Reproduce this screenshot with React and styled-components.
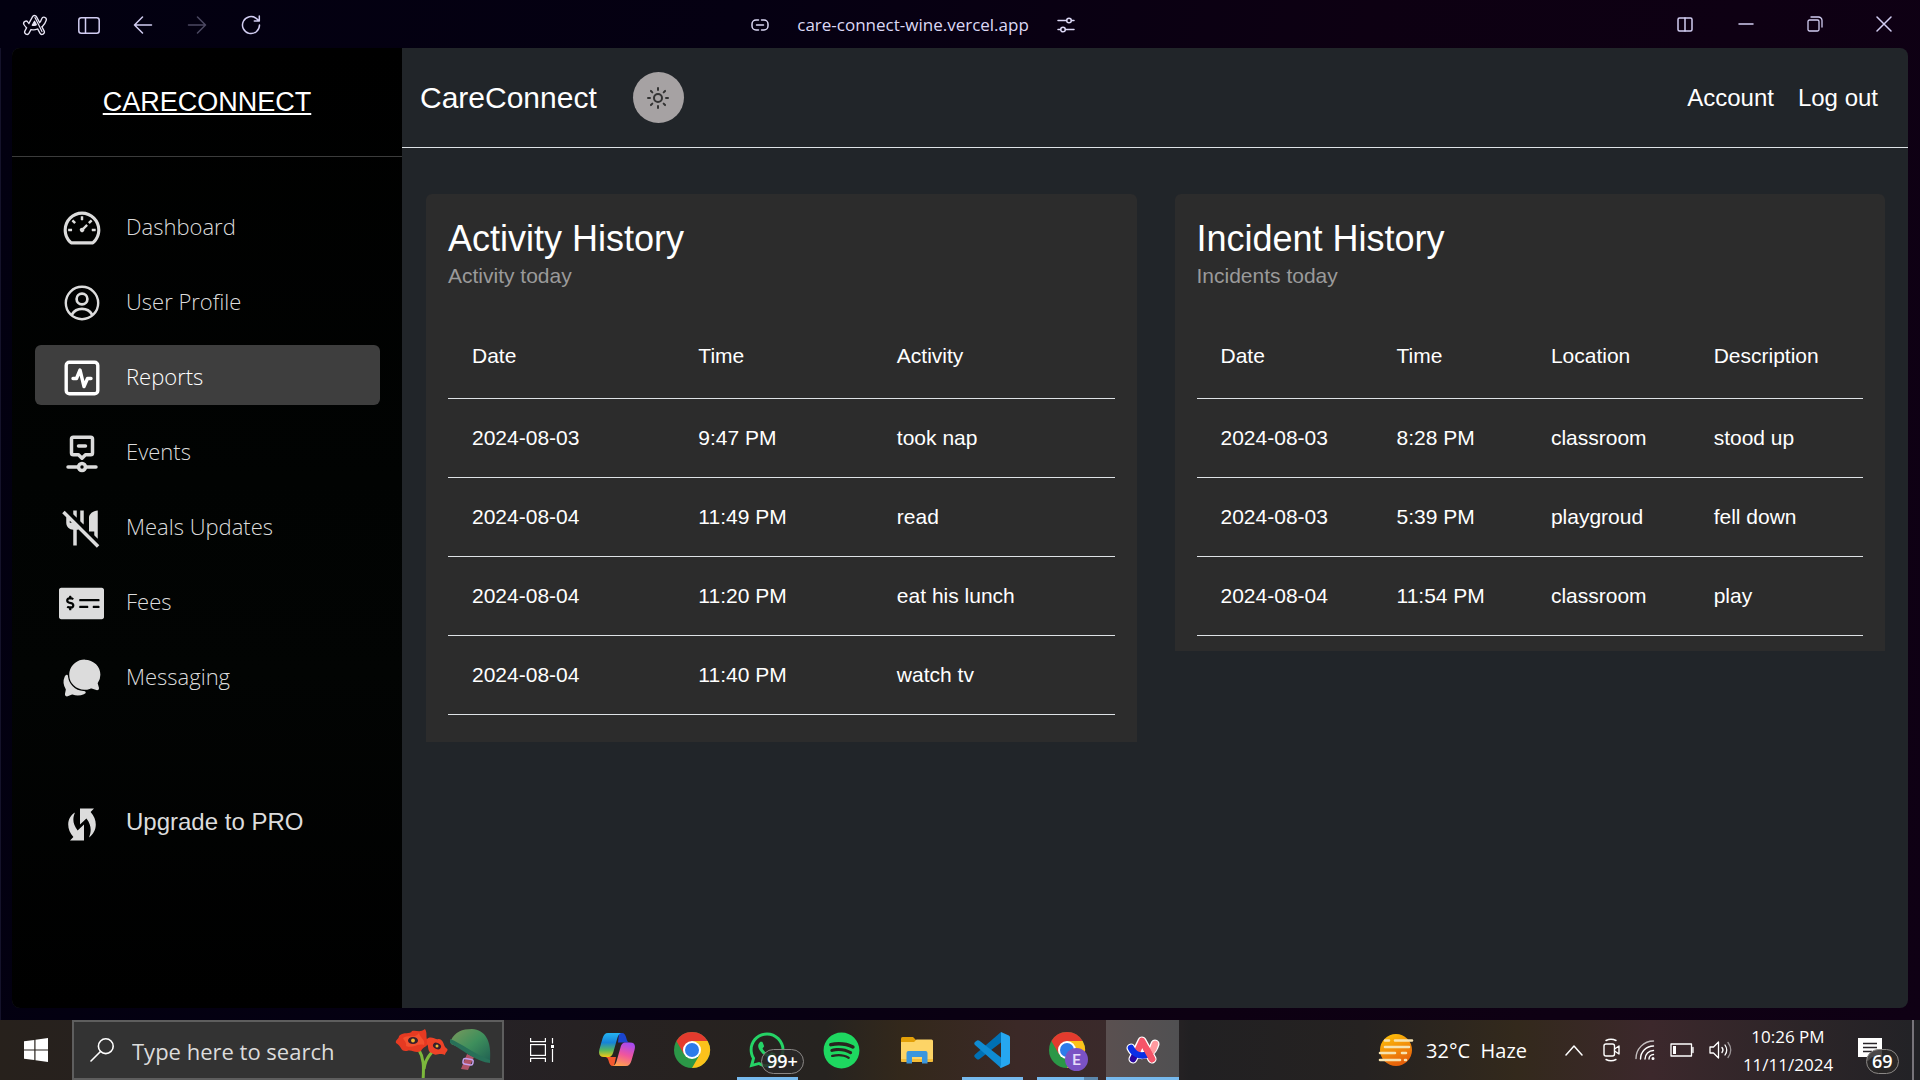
import React from "react";
import styled, { createGlobalStyle } from "styled-components";
import { AiOutlineDashboard } from "react-icons/ai";
import { MdNoMeals } from "react-icons/md";
import { FaMoneyCheckAlt, FaSpotify, FaWhatsapp } from "react-icons/fa";
import { IoChatbubbles } from "react-icons/io5";
import { TbTimelineEventMinus } from "react-icons/tb";
import { Sun } from "lucide-react";

const ui = `"Segoe UI", "Open Sans", "Noto Sans", sans-serif`;
const sans = `"Liberation Sans", Arial, sans-serif`;

const GlobalStyle = createGlobalStyle`
  *, *::before, *::after { box-sizing: border-box; }
  body { margin: 0; background: #05000f; font-family: ${sans}; color: #fff; }
  button { font: inherit; color: inherit; background: none; border: 0; padding: 0; cursor: pointer; }
  a { color: inherit; text-decoration: none; }
  h1, h2, p, ul { margin: 0; padding: 0; font-weight: 400; }
  ul { list-style: none; }
  svg { display: block; flex: none; }
`;

const Screen = styled.div`
  min-height: 100vh;
  display: flex;
  flex-direction: column;
  background: linear-gradient(100deg, #020010 0%, #050012 35%, #0d0012 65%, #0f0014 100%);
`;

/* ---------- browser bar ---------- */

const TitleBar = styled.header`
  height: 48px;
  display: grid;
  grid-template-columns: 8fr auto 9fr;
  align-items: center;
  color: #d2cdf2;
`;

const NavTools = styled.div`
  display: flex;
  align-items: center;
  padding: 2px 0 0 8px;
`;

const ToolButton = styled.button`
  width: 54px;
  height: 46px;
  display: grid;
  place-items: center;
  color: ${(p) => (p.$dim ? "#4c4862" : "inherit")};
`;

const Address = styled.div`
  display: flex;
  align-items: center;
  gap: 28px;
  padding-top: 2px;
  font-family: ${ui};
  font-size: 17px;
  line-height: 24px;
  color: #dcd8f5;
`;

const WindowTools = styled.div`
  display: flex;
  justify-content: flex-end;
  padding-right: 2px;
`;

const WindowButton = styled.button`
  width: ${(p) => (p.$narrow ? 52 : 69)}px;
  height: 48px;
  display: grid;
  place-items: center;
`;

/* ---------- app shell ---------- */

const Frame = styled.div`
  flex: 1;
  display: flex;
  padding: 0 12px 12px 11px;
  border-left: 1px solid #14122a;
`;

const AppWindow = styled.div`
  flex: 1;
  display: flex;
  border-radius: 8px;
  overflow: hidden;
  background: #212529;
`;

const Sidebar = styled.aside`
  width: 390px;
  flex: none;
  background: linear-gradient(180deg, #000 0%, #010302 45%, #020403 65%, #000 100%);
`;

const Brand = styled.div`
  height: 109px;
  padding-top: 38px;
  border-bottom: 1px solid #3c3c3c;
  text-align: center;
  font-size: 27px;
  line-height: 32px;

  a { text-decoration: underline; text-decoration-thickness: 2px; text-underline-offset: 2px; }
`;

const NavList = styled.ul`
  display: flex;
  flex-direction: column;
  gap: 15px;
  padding: 38px 22px 0 23px;
`;

const NavItem = styled.li`
  margin-top: ${(p) => (p.$spaced ? 71 : 0)}px;
`;

const NavLink = styled.a`
  height: 60px;
  display: flex;
  align-items: center;
  gap: 22px;
  padding-left: 24px;
  border-radius: 6px;
  font-family: ${(p) => (p.$plain ? sans : ui)};
  font-weight: ${(p) => (p.$plain ? 400 : 300)};
  font-size: ${(p) => (p.$plain ? 24 : 22)}px;
  line-height: 32px;
  color: ${(p) => (p.$active ? "#fff" : "#dcdcdc")};
  background: ${(p) => (p.$active ? "#3e3e3e" : "transparent")};
`;

const NavIcon = styled.span`
  width: 45px;
  padding-top: 6px;
  display: grid;
  place-items: center;
`;

const NavLabel = styled.span`
  padding-top: 2px;
`;

const Main = styled.main`
  flex: 1;
  min-width: 0;
`;

const TopBar = styled.div`
  height: 100px;
  display: flex;
  align-items: center;
  padding: 0 30px 0 18px;
  border-bottom: 1px solid #dee2e6;
`;

const AppName = styled.h1`
  font-size: 30px;
  line-height: 36px;
`;

const ThemeButton = styled.button`
  width: 51px;
  height: 51px;
  margin-left: 36px;
  display: grid;
  place-items: center;
  border-radius: 50%;
  background: #a6a2a3;
  color: #333;
`;

const AccountLinks = styled.nav`
  margin-left: auto;
  display: flex;
  gap: 24px;
  font-size: 24px;
  line-height: 32px;
`;

const Cards = styled.div`
  display: grid;
  grid-template-columns: 1fr 1fr;
  align-items: start;
  gap: 38px;
  padding: 46px 23px 46px 24px;
`;

const Card = styled.section`
  padding: 23px 22px ${(p) => p.$bottom}px;
  border-radius: 6px 6px 0 0;
  background: #2c2c2c;
`;

const CardTitle = styled.h2`
  font-size: 36px;
  line-height: 44px;
`;

const CardNote = styled.p`
  font-size: 21px;
  line-height: 30px;
  color: #9a9a9a;
`;

const Table = styled.table`
  width: 100%;
  margin-top: 25px;
  border-spacing: 0;
  font-size: 21px;
  line-height: 30px;
  text-align: left;

  th { font-weight: 400; padding: 25px 24px 27px; border-bottom: 1px solid #dee2e6; }
  td { padding: 24px; border-bottom: 1px solid #dee2e6; }
`;

/* ---------- taskbar ---------- */

const Taskbar = styled.footer`
  height: 60px;
  display: flex;
  font-family: ${ui};
  background: linear-gradient(90deg, #27211c 0, #252126 24%, #272220 36%, #262320 43%, #33281b 47%, #3b2927 53%, #3a2a2b 58%, #212022 62%, #252221 71%, #33291c 79%, #3c282c 86%, #2c2528 94%, #222226 100%);
`;

const StartButton = styled.button`
  width: 72px;
  display: grid;
  place-items: center;
`;

const SearchBox = styled.label`
  width: 432px;
  display: flex;
  align-items: center;
  padding-left: 16px;
  border: 2px solid #5e5e5e;
  background: #333;
`;

const SearchInput = styled.input`
  flex: 1;
  min-width: 0;
  margin-left: 18px;
  padding: 2px 0 0;
  border: 0;
  outline: 0;
  background: none;
  font: 400 22px/28px ${ui};
  color: #fff;

  &::placeholder { color: #dcdcdc; opacity: 1; }
`;

const TaskButton = styled.button`
  position: relative;
  width: 75px;
  display: grid;
  place-items: center;

  ${(p) => p.$current && "margin-left: 2px; width: 73px; background: linear-gradient(90deg, #5a5050, #505052);"}

  &::after {
    content: "";
    display: ${(p) => (p.$running || p.$current ? "block" : "none")};
    position: absolute;
    bottom: 0;
    left: ${(p) => (p.$current ? 0 : 8)}px;
    right: ${(p) => (p.$current ? 0 : 6)}px;
    height: 3px;
    background: ${(p) => (p.$stacked ? "linear-gradient(90deg, #76b9ed 47px, #5c87ab 47px)" : "#76b9ed")};
  }
`;

const Badge = styled.span`
  position: absolute;
  top: 29px;
  left: ${(p) => p.$left}px;
  height: 25px;
  padding: 0 5px;
  border: 1px solid #8a8785;
  border-radius: 13px;
  background: rgba(42, 40, 40, 0.85);
  font-size: 18px;
  font-weight: 600;
  line-height: 23px;
`;

const Tray = styled.div`
  margin-left: auto;
  display: flex;
  align-items: center;
`;

const Weather = styled.button`
  display: flex;
  align-items: center;
  gap: 12px;
  margin-right: 38px;
  font-size: 20px;
  line-height: 28px;
  white-space: pre;

  span { padding-top: 2px; }
`;

const TrayIcons = styled.div`
  display: flex;
  align-items: center;
  gap: 15px;
`;

const Clock = styled.time`
  width: 108px;
  margin-left: 1px;
  padding-top: 2px;
  text-align: center;
  font-size: 17px;
  line-height: 28px;
`;

const NoticeButton = styled.button`
  position: relative;
  width: 70px;
  height: 60px;
  padding-left: 16px;
  display: flex;
  align-items: center;
`;

const DesktopEdge = styled.span`
  align-self: stretch;
  width: 8px;
  border-left: 2px solid #77747a;
`;

/* ---------- drawings ---------- */

const Line = ({ w = 24, h = w, box, sw = 1.5, children }) => (
  <svg width={w} height={h} viewBox={box || `0 0 ${w} ${h}`} fill="none" stroke="currentColor"
    strokeWidth={sw} strokeLinecap="round" strokeLinejoin="round" aria-hidden="true">{children}</svg>
);

const ArcOutline = () => (
  <svg width="26" height="22" viewBox="0 0 26 22" fill="none" strokeLinecap="round" strokeLinejoin="round" aria-hidden="true">
    <g stroke="#e9e6f6" strokeWidth="6">
      <path d="M4 9.500C7 15.500 19 15 22 5.500" />
      <path d="M5 18 L12.500 4 L20 18" />
    </g>
    <g stroke="#04000f" strokeWidth="3.400">
      <path d="M4 9.500C7 15.500 19 15 22 5.500" />
      <path d="M5 18 L12.500 4 L20 18" />
    </g>
    <path d="M10.200 11.200L12.500 7.200L14.300 10.600C13 11.300 11.500 11.500 10.200 11.200Z M13 3.500L20 17.500" stroke="#e9e6f6" strokeWidth="1.200" />
  </svg>
);

const UserIcon = () => (
  <Line w={36} sw={2.4}>
    <circle cx="18" cy="18" r="16.200" />
    <circle cx="18" cy="14" r="5.400" strokeWidth="2.700" />
    <path d="M8 29.500C10.500 25 14 23.800 18 23.800S25.500 25 28 29.500" strokeWidth="2.700" />
  </Line>
);

const ReportIcon = () => (
  <Line w={36} sw={3.4}>
    <rect x="2.200" y="2.200" width="31.600" height="31.600" rx="3.200" />
    <path d="M9 18.500H12.500L16 10L20 26.500L23.500 18.500H27" />
  </Line>
);

const UpgradeIcon = () => (
  <svg width="28" height="33" viewBox="0 0 28 33" fill="currentColor" aria-hidden="true">
    <path d="M12 .5H26L22.600 4C30 12 29.500 23.500 21 29.500C23.500 23.500 23.600 17 18.400 10.500L12 16.500Z" />
    <path d="M16 32.500H2L5.400 29C-2 21 -1.500 9.500 7 4.500C4.500 10 4.500 16 9.600 22.500L16 16.500Z" />
  </svg>
);

const Windows = () => (
  <svg width="24" height="24" viewBox="0 0 24 24" fill="#fff" aria-hidden="true">
    <path d="M0 3.300L10.300 1.900V11.400H0ZM11.500 1.700L24 0V11.400H11.500ZM0 12.500H10.300V22.100L0 20.700ZM11.500 12.500H24V24L11.500 22.300Z" />
  </svg>
);

const Poppies = () => (
  <svg width="107" height="56" viewBox="0 -2 107 56" aria-hidden="true">
    <defs>
      <linearGradient id="helmet" x1="0" y1="0" x2="1" y2="1"><stop offset="0" stopColor="#7a9a5c" /><stop offset=".5" stopColor="#3e8f5c" /><stop offset="1" stopColor="#1f5f52" /></linearGradient>
    </defs>
    <g transform="translate(0 4)">
      <path d="M23 20C29 30 29 38 28 53M37 24C31 31 30 35 29 41" fill="none" stroke="#7cb83c" strokeWidth="3" />
      <path d="M4 8C9 3 15 7 17 3C22 2 25 5 30 1C33 6 30 9 33 13C34 19 28 18 26 23C20 26 17 21 12 23C5 24 7 18 1 15C0 12 4 11 4 8Z" fill="#e63a22" />
      <path d="M8 10C14 6 20 11 24 5C25 10 31 12 29 17C22 15 18 21 11 18C12 14 9 13 8 10Z" fill="#f4502e" />
      <ellipse cx="18" cy="12.500" rx="5" ry="3.600" fill="#35202c" /><circle cx="18" cy="12.500" r="1.900" fill="#f2b632" />
      <path d="M32 11C36 7 40 12 44 11C49 12 48 17 51 20C55 22 50 24 50 27C44 24 41 29 37 25C32 24 34 18 32 16Z" fill="#ee4227" />
      <ellipse cx="42" cy="18" rx="4.200" ry="3" fill="#35202c" transform="rotate(25 42 18)" /><circle cx="42" cy="18" r="1.500" fill="#f2b632" />
    </g>
    <g transform="translate(0 4)">
      <path d="M72 26L79 29L73 42L66 41Z" fill="#b05468" /><rect x="68" y="31" width="10" height="5.500" rx="2" fill="none" stroke="#c6a0ee" strokeWidth="1.500" transform="rotate(10 73 34)" />
      <path d="M56 12C60 4 67 1 77 1C90 2 97 12 95 34C82 33 69 20 56 16Z" fill="url(#helmet)" />
      <path d="M55 11C66 15 79 26 95 32V35C82 34 69 23 55 15Z" fill="#287058" />
    </g>
  </svg>
);

const TaskView = () => (
  <svg width="24" height="24" viewBox="0 0 24 24" fill="none" stroke="#fff" strokeWidth="1.200" aria-hidden="true">
    <path d="M.6 0V3.600H15.400V0M.6 24V20.400H15.400V24M22.500 0V5.500M22.500 11V24" /><rect x=".6" y="6.600" width="14.800" height="10.800" /><rect x="21" y="7" width="3" height="3" fill="#fff" stroke="none" />
  </svg>
);

const Copilot = () => (
  <svg width="36" height="34" viewBox="0 0 36 34" aria-hidden="true">
    <defs>
      <linearGradient id="cpa" x1="0" y1="0" x2="0" y2="1"><stop offset="0" stopColor="#25b4f2" /><stop offset=".4" stopColor="#1683d8" /><stop offset=".72" stopColor="#58b85c" /><stop offset="1" stopColor="#f3c916" /></linearGradient>
      <linearGradient id="cpb" x1=".6" y1="0" x2=".3" y2="1"><stop offset="0" stopColor="#a64af0" /><stop offset=".5" stopColor="#f0559e" /><stop offset="1" stopColor="#ffa24c" /></linearGradient>
    </defs>
    <path d="M20 0H23C25.500 0 26.500 2 27.300 5C28 8 29 9.500 31 9.500H19Z" fill="#1a45cf" />
    <path d="M9 24H17L15 33H14C11.500 33 10.500 31 9.800 28.500C9.200 26 8.500 24 5 24Z" fill="#f4582e" />
    <path d="M9 0H22C19.500 1 18.800 3.500 17.800 7L14.500 18.500C13.500 22 12.500 24 9 24H5C.5 24 -.8 21 .5 16L3.500 5.500C4.500 2 6 0 9 0Z" fill="url(#cpa)" />
    <path d="M27 33H14C16.500 32 17.200 29.500 18.200 26L21.500 14.500C22.500 11 23.500 9.500 27 9.500H31C35.500 9.500 36.800 12 35.500 17L32.500 27.500C31.500 31 30 33 27 33Z" fill="url(#cpb)" />
  </svg>
);

const Chrome = ({ profile }) => (
  <svg width="44" height="44" viewBox="-22 -22 44 44" aria-hidden="true">
    <circle r="18" fill="#2b9747" />
    <path d="M0 -9H15.600A18 18 0 0 1 0 18L7.800 4.500Z" fill="#fcc21b" />
    <path d="M-15.600 -9A18 18 0 0 1 15.600 -9H0L-7.800 4.500Z" fill="#e33b2e" />
    <circle r="9" fill="#fff" /><circle r="7" fill="#2d7bea" />
    {profile && <><circle cx="9.500" cy="9.500" r="11.500" fill="#7a52c4" /><text x="9.500" y="15" textAnchor="middle" fill="#e6dcfa" fontSize="15" fontWeight="600" fontFamily="Roboto, sans-serif">E</text></>}
  </svg>
);

const Folder = () => (
  <svg width="32" height="27" viewBox="0 0 32 27" aria-hidden="true">
    <path d="M0 1.500Q0 0 1.500 0H12L15 3V7H0Z" fill="#e3a008" />
    <path d="M0 5H13L15.500 2.500H30.500Q32 2.500 32 4V24.500H0Z" fill="#fdd466" />
    <path d="M0 22H32V23.500Q32 25 30.500 25H1.500Q0 25 0 23.500Z" fill="#f5bd37" />
    <path d="M5.500 16Q5.500 14 7.500 14H24.500Q26.500 14 26.500 16V26.500H21V20H11V26.500H5.500Z" fill="#3b96dd" />
  </svg>
);

const VsCode = () => (
  <svg width="36" height="36" viewBox="0 0 36 36" aria-hidden="true">
    <path d="M27 0L1 22.500Q-.5 24 1 25.500L3 27.200Q4.200 28 5.500 27L27 10.500Z" fill="#0070b4" />
    <path d="M27 36L1 13Q-.5 11.500 1 10L3 8.400Q4.200 7.800 5.500 8.700L27 25.500Z" fill="#0f8bd2" />
    <path d="M27 0L34.800 3.500Q36 4.100 36 5.500V30.500Q36 31.900 34.800 32.500L27 36Q25.500 35.500 27 33Z" fill="#26a7f0" />
  </svg>
);

const ArcColor = () => (
  <svg width="34" height="30" viewBox="0 0 34 30" fill="none" strokeLinecap="round" strokeLinejoin="round" aria-hidden="true">
    <g stroke="#fff" strokeWidth="9"><path d="M5 13C9 22 25 23 29 9" /><path d="M7 24L16 6L26 24" /></g>
    <path d="M18 20.500C23 19.500 27.500 15.500 29 9" stroke="#ff9a9f" strokeWidth="6.500" />
    <path d="M7 24L9.500 19" stroke="#2a06a0" strokeWidth="6.500" />
    <path d="M10.500 18L16 6L26 24" stroke="#f55468" strokeWidth="6.500" />
    <path d="M5 13C7.500 18.500 13 21.500 20 20" stroke="#0a2fe6" strokeWidth="6.500" />
    <path d="M20.500 14L26 24" stroke="#f55468" strokeWidth="6.500" />
  </svg>
);

const Haze = () => (
  <svg width="36" height="34" viewBox="0 0 36 34" aria-hidden="true">
    <defs><linearGradient id="sun" x1="0" y1="0" x2=".4" y2="1"><stop offset="0" stopColor="#ffc90a" /><stop offset="1" stopColor="#e7620a" /></linearGradient></defs>
    <circle cx="18" cy="17" r="16" fill="url(#sun)" />
    <g stroke="#f7e3b0" strokeWidth="2.600" strokeLinecap="round"><path d="M7 7.500H11M17 7.500H34M7 14H31M2 20H17M24 20H28M2 27H22M27 27H28" /></g>
  </svg>
);

/* ---------- data ---------- */

const links = [
  { label: "Dashboard", icon: <AiOutlineDashboard size={42} /> },
  { label: "User Profile", icon: <UserIcon /> },
  { label: "Reports", icon: <ReportIcon />, active: true },
  { label: "Events", icon: <TbTimelineEventMinus size={42} /> },
  { label: "Meals Updates", icon: <MdNoMeals size={42} /> },
  { label: "Fees", icon: <FaMoneyCheckAlt size={45} /> },
  { label: "Messaging", icon: <IoChatbubbles size={42} /> },
  { label: "Upgrade to PRO", icon: <UpgradeIcon />, plain: true },
];

const activity = {
  title: "Activity History",
  note: "Activity today",
  columns: ["Date", "Time", "Activity"],
  rows: [
    ["2024-08-03", "9:47 PM", "took nap"],
    ["2024-08-04", "11:49 PM", "read"],
    ["2024-08-04", "11:20 PM", "eat his lunch"],
    ["2024-08-04", "11:40 PM", "watch tv"],
  ],
};

const incidents = {
  title: "Incident History",
  note: "Incidents today",
  columns: ["Date", "Time", "Location", "Description"],
  rows: [
    ["2024-08-03", "8:28 PM", "classroom", "stood up"],
    ["2024-08-03", "5:39 PM", "playgroud", "fell down"],
    ["2024-08-04", "11:54 PM", "classroom", "play"],
  ],
};

const HistoryCard = ({ data, bottom }) => (
  <Card $bottom={bottom}>
    <CardTitle>{data.title}</CardTitle>
    <CardNote>{data.note}</CardNote>
    <Table>
      <thead><tr>{data.columns.map((c) => <th key={c} scope="col">{c}</th>)}</tr></thead>
      <tbody>
        {data.rows.map((row, i) => <tr key={i}>{row.map((cell, j) => <td key={j}>{cell}</td>)}</tr>)}
      </tbody>
    </Table>
  </Card>
);

const BrowserBar = () => (
  <TitleBar>
    <NavTools>
      <ToolButton aria-label="Arc menu"><ArcOutline /></ToolButton>
      <ToolButton aria-label="Toggle sidebar"><Line w={22} h={17}><rect x=".8" y=".8" width="20.400" height="15.400" rx="2.500" /><path d="M7.500 1V16" /></Line></ToolButton>
      <ToolButton aria-label="Back"><Line w={20} h={18}><path d="M18.500 9H1.500M9.500 1L1.500 9L9.500 17" /></Line></ToolButton>
      <ToolButton $dim aria-label="Forward"><Line w={20} h={18}><path d="M1.500 9H18.500M10.500 1L18.500 9L10.500 17" /></Line></ToolButton>
      <ToolButton aria-label="Reload"><Line w={20} h={20}><path d="M18.500 10A8.500 8.500 0 1 1 15.500 3.600L18 5.700M18.300 1V6H13.300" /></Line></ToolButton>
    </NavTools>
    <Address>
      <Line w={18} h={12}><path d="M7.500 1H5A4 4 0 0 0 1 5V7A4 4 0 0 0 5 11H7.500M10.500 1H13A4 4 0 0 1 17 5V7A4 4 0 0 1 13 11H10.500M5.500 6H12.500" /></Line>
      <span>care-connect-wine.vercel.app</span>
      <Line w={18} h={16}><path d="M1 3.500H9.500M14.500 3.500H17M1 12.500H3.500M8.500 12.500H17" /><circle cx="12" cy="3.500" r="2.300" /><circle cx="6" cy="12.500" r="2.300" /></Line>
    </Address>
    <WindowTools>
      <WindowButton $narrow aria-label="Split view"><Line w={16} h={16} box="0 -1 16 16"><rect x="1" y="1" width="14" height="13" rx="1.500" /><path d="M8 1V14" /></Line></WindowButton>
      <WindowButton aria-label="Minimize"><Line w={16} h={2}><path d="M1 1H15" /></Line></WindowButton>
      <WindowButton aria-label="Restore"><Line w={16} h={16} sw={1.3}><rect x="1" y="4" width="11" height="11" rx="1.500" /><path d="M4 1H11.500A3.500 3.500 0 0 1 15 4.500V11" /></Line></WindowButton>
      <WindowButton aria-label="Close"><Line w={16} h={16}><path d="M1 1L15 15M15 1L1 15" /></Line></WindowButton>
    </WindowTools>
  </TitleBar>
);

const SystemTaskbar = () => (
  <Taskbar>
    <StartButton aria-label="Start"><Windows /></StartButton>
    <SearchBox>
      <Line w={24} sw={1.6}><circle cx="15.800" cy="8.200" r="7.400" /><path d="M10.500 13.500L1 23" /></Line>
      <SearchInput type="text" placeholder="Type here to search" aria-label="Type here to search" />
      <Poppies />
    </SearchBox>
    <TaskButton aria-label="Task view"><TaskView /></TaskButton>
    <TaskButton aria-label="Copilot"><Copilot /></TaskButton>
    <TaskButton aria-label="Chrome"><Chrome /></TaskButton>
    <TaskButton $running aria-label="WhatsApp"><FaWhatsapp size={40} color="#25d366" /><Badge $left={32}>99+</Badge></TaskButton>
    <TaskButton aria-label="Spotify"><FaSpotify size={37} color="#1ed760" /></TaskButton>
    <TaskButton aria-label="File Explorer"><Folder /></TaskButton>
    <TaskButton $running aria-label="Visual Studio Code"><VsCode /></TaskButton>
    <TaskButton $running $stacked aria-label="Chrome, second profile"><Chrome profile /></TaskButton>
    <TaskButton $current aria-label="Arc"><ArcColor /></TaskButton>
    <Tray>
      <Weather><Haze /><span>32°C  Haze</span></Weather>
      <TrayIcons>
        <Line w={18} h={11}><path d="M1 10L9 1L17 10" /></Line>
        <Line w={22} h={24} sw={1.4} box="-3 0 22 24"><path d="M5 2.500Q10 0 15 2.500M5 21.500Q10 24 15 21.500" /><rect x="3" y="6" width="10.500" height="12" rx="2" /><path d="M13.500 11L18 8V16L13.500 13" /></Line>
        <Line w={20} h={20} sw={1.4}><path d="M1 18.500A17.500 17.500 0 0 1 18.500 1" opacity=".7" /><path d="M5.500 19A13 13 0 0 1 18.500 6M10 19A8.500 8.500 0 0 1 18.500 10.500M14 19A4.500 4.500 0 0 1 18.500 14.500" /><circle cx="18" cy="18.500" r=".8" /></Line>
        <Line w={24} h={14} sw={1.3}><path d="M1 1H21.500V13H1ZM23 4.500V9.500" /><rect x="3" y="3" width="3" height="8" fill="currentColor" stroke="none" /></Line>
        <Line w={24} h={20} sw={1.3}><path d="M1 7H4.500L9.500 2V18L4.500 13H1Z" /><path d="M13 7.500Q15 10 13 12.500M16 5Q19.500 10 16 15" /><path d="M19 2.500Q24.500 10 19 17.500" opacity=".5" /></Line>
      </TrayIcons>
      <Clock dateTime="2024-11-11T22:26">10:26 PM<br />11/11/2024</Clock>
      <NoticeButton aria-label="Notifications">
        <svg width="24" height="24" viewBox="0 0 24 24" aria-hidden="true"><path d="M0 0H24V19H14L9 24V19H0Z" fill="#fff" /><path d="M5 5.500H19M5 9.500H19M5 13.500H14" stroke="#29252a" strokeWidth="1.300" /></svg>
        <Badge $left={24}>69</Badge>
      </NoticeButton>
      <DesktopEdge />
    </Tray>
  </Taskbar>
);

export default function App() {
  return (
    <Screen>
      <GlobalStyle />
      <BrowserBar />
      <Frame>
        <AppWindow>
          <Sidebar>
            <Brand><a href="#home">CARECONNECT</a></Brand>
            <nav>
              <NavList>
                {links.map((l) => (
                  <NavItem key={l.label} $spaced={l.plain}>
                    <NavLink href={`#${l.label.toLowerCase().replace(/ /g, "-")}`} $active={l.active} $plain={l.plain}>
                      <NavIcon>{l.icon}</NavIcon>
                      <NavLabel>{l.label}</NavLabel>
                    </NavLink>
                  </NavItem>
                ))}
              </NavList>
            </nav>
          </Sidebar>
          <Main>
            <TopBar>
              <AppName>CareConnect</AppName>
              <ThemeButton aria-label="Toggle theme"><Sun size={24} /></ThemeButton>
              <AccountLinks>
                <a href="#account">Account</a>
                <a href="#logout">Log out</a>
              </AccountLinks>
            </TopBar>
            <Cards>
              <HistoryCard data={activity} bottom={27} />
              <HistoryCard data={incidents} bottom={15} />
            </Cards>
          </Main>
        </AppWindow>
      </Frame>
      <SystemTaskbar />
    </Screen>
  );
}
